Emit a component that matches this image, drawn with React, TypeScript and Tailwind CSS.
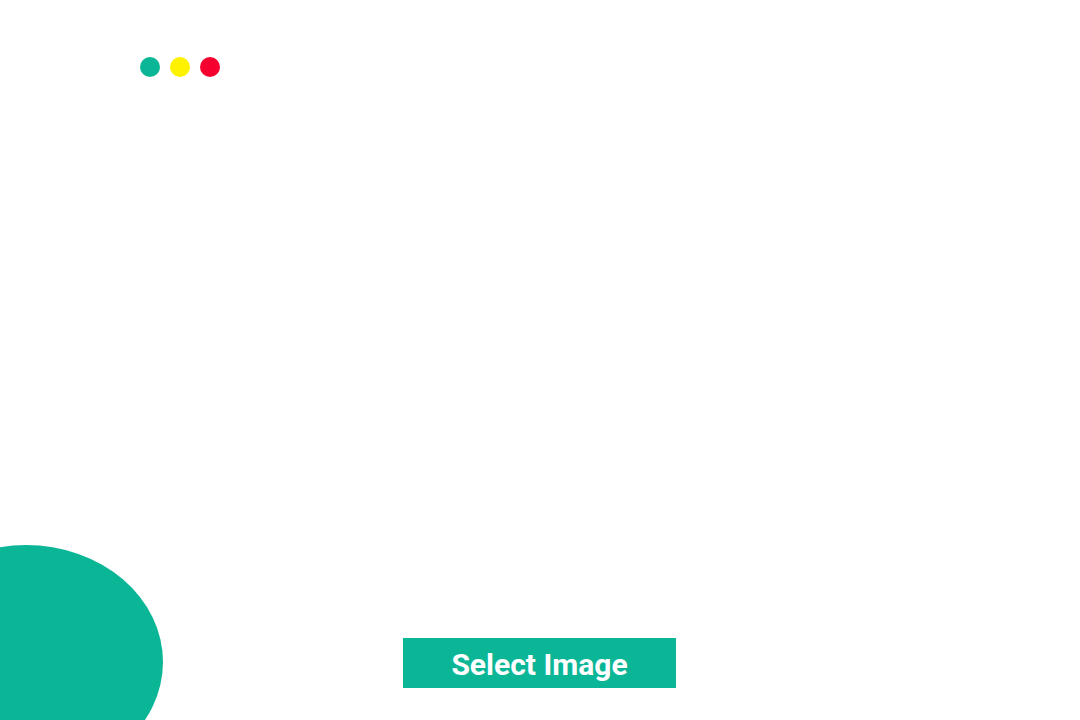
export default function App() {
  return (
    <div className="relative flex h-[720px] w-full flex-col overflow-hidden bg-white" style={{ fontFamily: "Roboto, sans-serif" }}>
      <div className="flex gap-[10px] pl-[140px] pt-[57px]">
        <span className="h-5 w-5 rounded-full bg-[#0bb697]" />
        <span className="h-5 w-5 rounded-full bg-[#fff200]" />
        <span className="h-5 w-5 rounded-full bg-[#f6002f]" />
      </div>

      <svg className="absolute bottom-0 left-0" width="200" height="180" viewBox="0 540 200 180">
        <ellipse cx="26" cy="662" rx="137" ry="117" fill="#0bb697" />
      </svg>

      <div className="mt-auto mb-8 flex justify-center pr-px">
        <button className="relative h-[50px] w-[273px] bg-[#0bb697] pt-[3px] text-[30px] font-bold text-white">
          Select Image
        </button>
      </div>
    </div>
  );
}
